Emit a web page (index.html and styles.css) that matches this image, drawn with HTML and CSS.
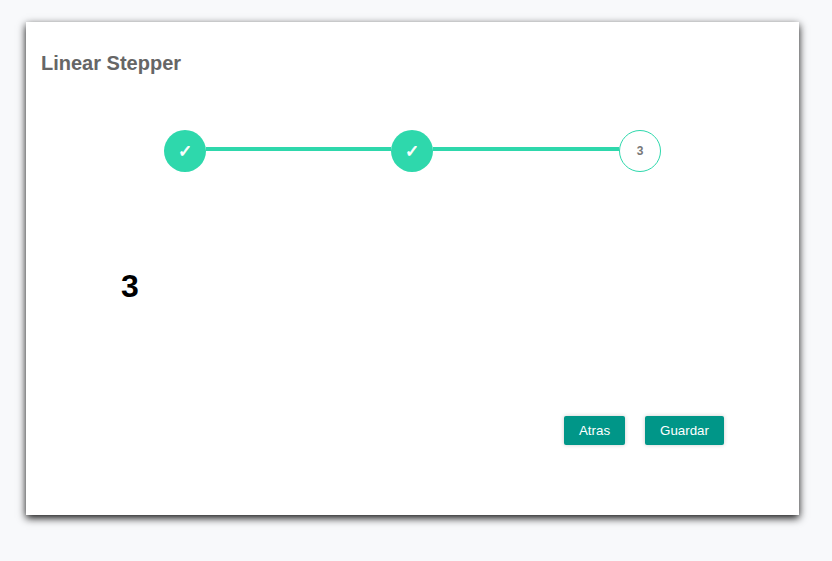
FILE: index.html
```html
<!DOCTYPE html>
<html lang="es">
<head>
<meta charset="utf-8">
<title>Linear Stepper</title>
<link rel="stylesheet" href="styles.css">
</head>
<body>
<main class="card">
  <h1 class="title">Linear Stepper</h1>
  <div class="stepper">
    <div class="step step-done">✓</div>
    <div class="connector connector-first"></div>
    <div class="step step-done">✓</div>
    <div class="connector"></div>
    <div class="step step-current">3</div>
  </div>
  <div class="content">3</div>
  <div class="actions">
    <button class="btn btn-back" type="button">Atras</button>
    <button class="btn btn-save" type="button">Guardar</button>
  </div>
</main>
</body>
</html>
```
FILE: styles.css
```css
* { box-sizing: border-box; }
html, body { height: 100%; }
body {
  margin: 0;
  padding: 22px 33px 46px 26px;
  background: #f8f9fb;
  font-family: "Liberation Sans", Arial, sans-serif;
}
.card {
  width: 773px;
  height: 493px;
  background: #fff;
  box-shadow: 0 3px 8px rgba(0, 0, 0, 0.95);
  padding: 29px 15px 0;
}
.title {
  margin: 0;
  font-size: 20px;
  line-height: 24px;
  font-weight: 700;
  color: #666;
}
.stepper {
  display: flex;
  align-items: flex-start;
  width: 497px;
  margin: 55px 0 0 123px;
}
.step {
  flex: none;
  width: 42px;
  height: 42px;
  border-radius: 50%;
  display: flex;
  align-items: center;
  justify-content: center;
}
.step-done {
  background: #2ed8ac;
  color: #fff;
  font-family: "DejaVu Sans", sans-serif;
  font-size: 17px;
  font-weight: 700;
  -webkit-text-stroke: 0.7px #fff;
}
.step-current {
  border: 1px solid #2ed8ac;
  background: #fff;
  color: #777;
  font-size: 12px;
  font-weight: 700;
}
.connector {
  flex: 1;
  height: 4px;
  margin-top: 17px;
  background: #2ed8ac;
}
.connector-first { flex: none; width: 185px; }
.content {
  margin: 96px 0 0 80px;
  font-size: 32px;
  line-height: 36px;
  font-weight: 700;
  color: #000;
}
.actions {
  display: flex;
  justify-content: flex-end;
  gap: 20px;
  margin: 112px 60px 0 0;
}
.btn {
  height: 29px;
  padding: 0;
  border: 0;
  border-radius: 2px;
  background: #009688;
  color: #fff;
  font-family: "Liberation Sans", Arial, sans-serif;
  font-size: 13.333px;
  box-shadow: 0 0 4px rgba(0, 0, 0, 0.2);
}
.btn-back { width: 61px; }
.btn-save { width: 79px; }
```
